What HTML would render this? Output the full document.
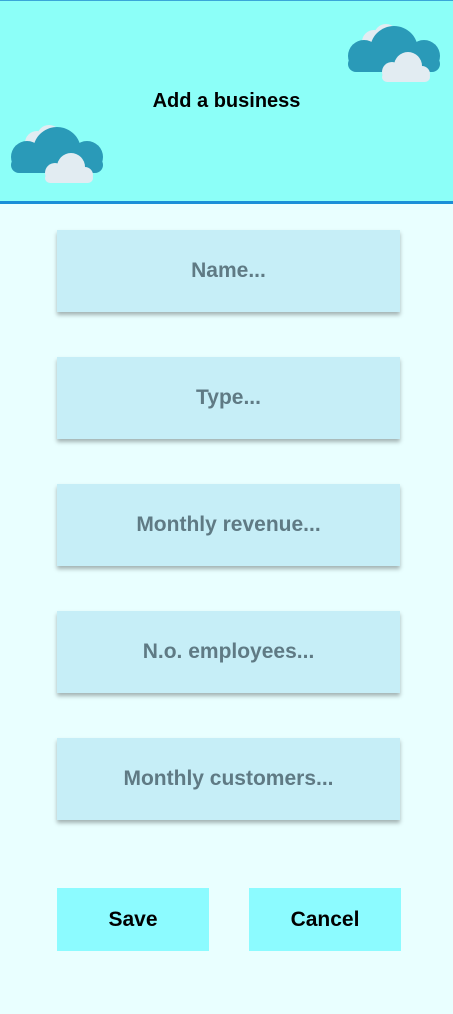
<!DOCTYPE html>
<html><head><style>
body{margin:0;width:453px;height:1014px;background:#e9ffff;font-family:"Liberation Sans",Arial,sans-serif;position:relative;overflow:hidden}
.hdr{position:absolute;left:0;top:0;width:453px;background:#8cfff8;border-top:1px solid #3aa6d8;border-bottom:3px solid #1a8fd8;box-sizing:border-box;height:204px}
.title{position:absolute;top:90px;width:100%;text-align:center;font-weight:bold;font-size:20px;color:#000}
.in{position:absolute;left:57px;width:343px;height:82px;background:#c6eef7;box-shadow:0 3px 4px rgba(0,0,0,.3);text-align:center;line-height:82px;font-weight:bold;font-size:21px;color:#5f7a84}
.btn{position:absolute;top:888px;width:152px;height:63px;background:#8cfbff;text-align:center;line-height:63px;font-weight:bold;font-size:21px;color:#000}
svg{position:absolute}
</style></head><body>
<div class="hdr"></div>
<svg style="left:346px;top:22px" width="98" height="62" viewBox="0 0 98 62">
<g fill="#e2ecf2"><circle cx="28" cy="20" r="12"/><circle cx="40" cy="14" r="12"/></g>
<g fill="#2a9ab8"><circle cx="18" cy="34" r="16"/><circle cx="48" cy="28" r="24"/><circle cx="78" cy="34" r="16"/><rect x="2" y="34" width="92" height="16" rx="8"/></g>
<g fill="#e2ecf2"><circle cx="46" cy="50" r="10"/><circle cx="62" cy="44" r="14"/><circle cx="76" cy="52" r="8"/><rect x="36" y="50" width="48" height="10" rx="5"/></g>
</svg>
<svg style="left:9px;top:123px" width="98" height="62" viewBox="0 0 98 62">
<g fill="#e2ecf2"><circle cx="28" cy="20" r="12"/><circle cx="40" cy="14" r="12"/></g>
<g fill="#2a9ab8"><circle cx="18" cy="34" r="16"/><circle cx="48" cy="28" r="24"/><circle cx="78" cy="34" r="16"/><rect x="2" y="34" width="92" height="16" rx="8"/></g>
<g fill="#e2ecf2"><circle cx="46" cy="50" r="10"/><circle cx="62" cy="44" r="14"/><circle cx="76" cy="52" r="8"/><rect x="36" y="50" width="48" height="10" rx="5"/></g>
</svg>
<div class="title">Add a business</div>
<div class="in" style="top:230px">Name...</div>
<div class="in" style="top:357px">Type...</div>
<div class="in" style="top:484px">Monthly revenue...</div>
<div class="in" style="top:611px">N.o. employees...</div>
<div class="in" style="top:738px">Monthly customers...</div>
<div class="btn" style="left:57px">Save</div>
<div class="btn" style="left:249px">Cancel</div>
</body></html>
